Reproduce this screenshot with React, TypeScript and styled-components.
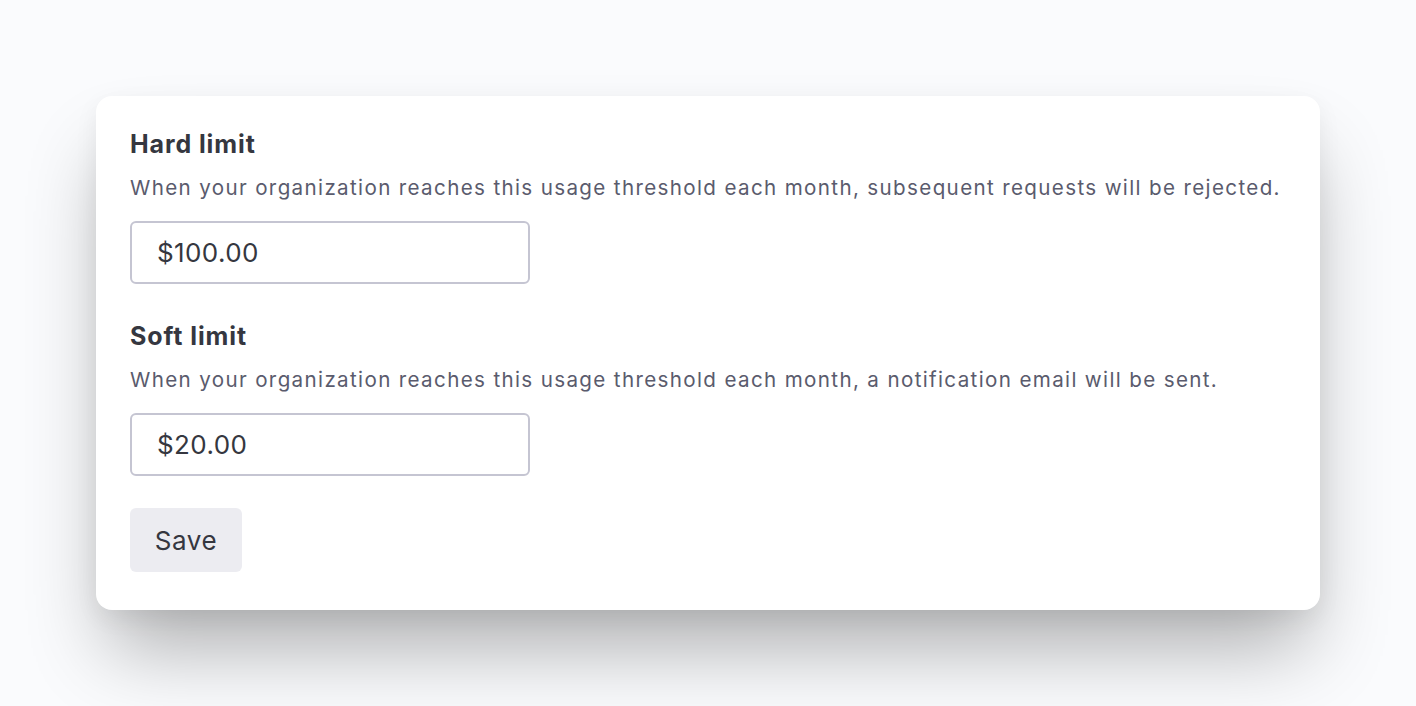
import React from "react";
import styled, { createGlobalStyle } from "styled-components";

const Global = createGlobalStyle`
  html, body { margin: 0; padding: 0; background: #fafbfd; }
  body { font-family: Inter, "Noto Sans", sans-serif; }
`;

const Page = styled.div`
  width: 1416px;
  height: 706px;
  box-sizing: border-box;
  padding: 96px 96px 0 96px;
  background: #fafbfd;
  overflow: hidden;
`;

const Card = styled.div`
  background: #fff;
  border-radius: 16px;
  box-shadow: 0 50px 80px -12px rgba(0, 0, 0, 0.3), 0 8px 24px rgba(0, 0, 0, 0.06);
  padding: 32px 34px 38px 34px;
  display: flex;
  flex-direction: column;
`;

const Section = styled.div`
  display: flex;
  flex-direction: column;
  & + & {
    margin-top: 36px;
  }
`;

const Title = styled.div`
  font-size: 25px;
  font-weight: 700;
  letter-spacing: 0.9px;
  color: #353740;
  line-height: 32px;
`;

const Desc = styled.div`
  font-size: 20.6px;
  letter-spacing: 1.35px;
  color: #5a5b6d;
  line-height: 30px;
  margin-top: 13px;
  white-space: nowrap;
`;

const Input = styled.input`
  margin-top: 18px;
  width: 400px;
  height: 63px;
  box-sizing: border-box;
  border: 2px solid #c5c5d2;
  border-radius: 6px;
  padding: 0 25px;
  font-family: inherit;
  font-size: 26px;
  letter-spacing: 0.4px;
  color: #353740;
  outline: none;
  background: #fff;
`;

const Button = styled.button`
  align-self: flex-start;
  margin-top: 32px;
  width: 112px;
  height: 64px;
  border: none;
  border-radius: 6px;
  background: #ececf1;
  font-family: inherit;
  font-size: 26px;
  letter-spacing: 0.6px;
  color: #353740;
  padding: 0;
`;

export default function App() {
  return (
    <Page>
      <Global />
      <Card>
        <Section>
          <Title>Hard limit</Title>
          <Desc>When your organization reaches this usage threshold each month, subsequent requests will be rejected.</Desc>
          <Input defaultValue="$100.00" />
        </Section>
        <Section>
          <Title>Soft limit</Title>
          <Desc>When your organization reaches this usage threshold each month, a notification email will be sent.</Desc>
          <Input defaultValue="$20.00" />
        </Section>
        <Button>Save</Button>
      </Card>
    </Page>
  );
}
